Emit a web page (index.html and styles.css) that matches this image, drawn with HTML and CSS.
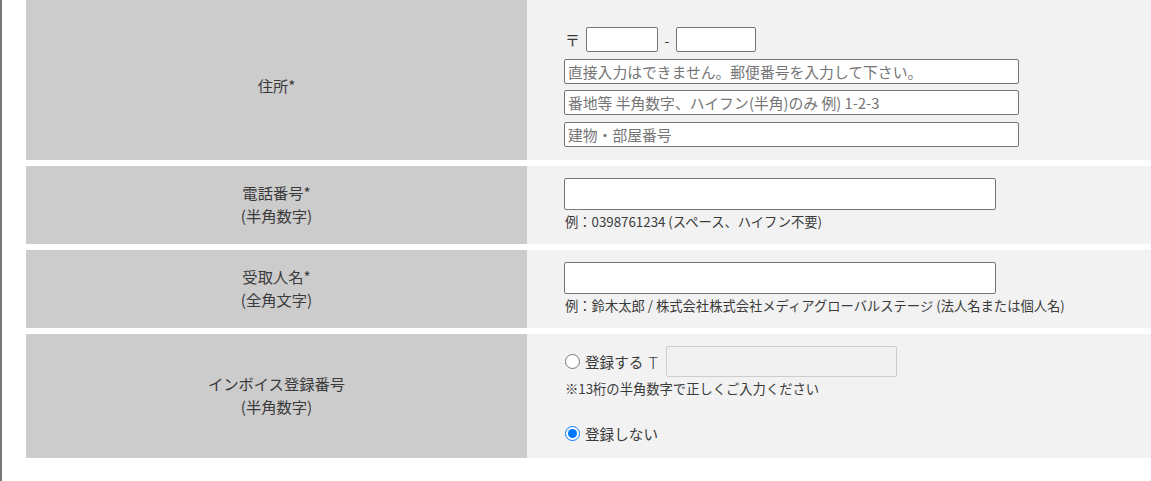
FILE: index.html
```html
<!DOCTYPE html>
<html lang="ja">
<head>
<meta charset="utf-8">
<title>お届け先入力</title>
<link rel="stylesheet" href="styles.css">
</head>
<body>
<div class="page">
  <div class="form">
    <div class="row row-cut">
      <div class="label"></div>
      <div class="field"></div>
    </div>

    <div class="row">
      <div class="label">住所*</div>
      <div class="field field-address">
        <div class="zip-line">
          <span class="zip-mark">〒</span>
          <input class="inp zip1" type="text">
          <span class="zip-sep">-</span>
          <input class="inp zip2" type="text">
        </div>
        <input class="inp addr" type="text" placeholder="直接入力はできません。郵便番号を入力して下さい。">
        <input class="inp addr" type="text" placeholder="番地等 半角数字、ハイフン(半角)のみ 例) 1-2-3">
        <input class="inp addr" type="text" placeholder="建物・部屋番号">
      </div>
    </div>

    <div class="row">
      <div class="label">電話番号*<br>(半角数字)</div>
      <div class="field">
        <input class="inp wide" type="text">
        <p class="hint">例：0398761234 (スペース、ハイフン不要)</p>
      </div>
    </div>

    <div class="row">
      <div class="label">受取人名*<br>(全角文字)</div>
      <div class="field">
        <input class="inp wide" type="text">
        <p class="hint">例：鈴木太郎 / 株式会社株式会社メディアグローバルステージ (法人名または個人名)</p>
      </div>
    </div>

    <div class="row">
      <div class="label">インボイス登録番号<br>(半角数字)</div>
      <div class="field field-invoice">
        <label class="radio-line">
          <input class="radio" type="radio" name="invoice">
          <span>登録する</span>
          <span class="t-mark">T</span>
          <input class="inp invoice-no" type="text" disabled>
        </label>
        <p class="hint">※13桁の半角数字で正しくご入力ください</p>
        <label class="radio-line radio-line2">
          <input class="radio" type="radio" name="invoice" checked>
          <span>登録しない</span>
        </label>
      </div>
    </div>
  </div>
</div>
</body>
</html>
```

FILE: styles.css
```css
html, body {
  margin: 0;
  padding: 0;
  background: #ffffff;
}

body {
  font-family: "Noto Sans CJK JP", "Noto Sans", sans-serif;
  color: #3a3a3a;
  font-size: 15px;
}

.page {
  border-left: 2px solid #777777;
  min-height: 100vh;
  padding-left: 24px;
  box-sizing: border-box;
}

.form {
  display: flex;
  flex-direction: column;
  gap: 6px;
}

.row {
  display: grid;
  grid-template-columns: 501px 1fr;
}

.row-cut {
  height: 8px;
}

.label {
  background: #cccccc;
  display: flex;
  align-items: center;
  justify-content: center;
  text-align: center;
  line-height: 23px;
  font-size: 15.3px;
  color: #3a3a3a;
  padding-bottom: 2px;
}

.field {
  background: #f2f2f2;
  padding: 12px 0 13px 37px;
}

.field-address {
  padding-top: 13px;
  padding-bottom: 13px;
  display: flex;
  flex-direction: column;
  gap: 6.5px;
}

.inp {
  box-sizing: border-box;
  border: 1px solid #767676;
  border-radius: 2px;
  background: #ffffff;
  padding: 1px 3px;
  margin: 0;
  font-family: inherit;
  font-size: 14.8px;
  color: #333;
  display: block;
}

.inp::placeholder {
  color: #757575;
}

.zip-line {
  display: flex;
  align-items: center;
  height: 25px;
}

.zip-mark {
  margin-left: 1px;
  width: 21px;
  font-size: 15px;
}

.zip1 {
  width: 72px;
  height: 25px;
}

.zip-sep {
  width: 18px;
  text-align: center;
  font-size: 14px;
}

.zip2 {
  width: 80px;
  height: 25px;
}

.addr {
  width: 455px;
  height: 25px;
}

.wide {
  width: 432px;
  height: 32px;
}

.hint {
  margin: 3px 0 0 1px;
  font-size: 13.3px;
  line-height: 18px;
  color: #3a3a3a;
}

.field-invoice {
  padding-top: 13px;
  padding-bottom: 13px;
}

.radio-line {
  display: flex;
  align-items: center;
  height: 30px;
  font-size: 14.6px;
  color: #3a3a3a;
}

.radio {
  width: 15px;
  height: 15px;
  margin: 0 5px 0 1px;
}

.t-mark {
  margin-left: 5px;
  margin-right: 8px;
  font-size: 16px;
  font-weight: 300;
}

.invoice-no {
  width: 231px;
  height: 31px;
  background: rgba(239, 239, 239, 0.3);
  border-color: rgba(118, 118, 118, 0.3);
}

.radio-line2 {
  margin-top: 25px;
  height: 22px;
}
```
